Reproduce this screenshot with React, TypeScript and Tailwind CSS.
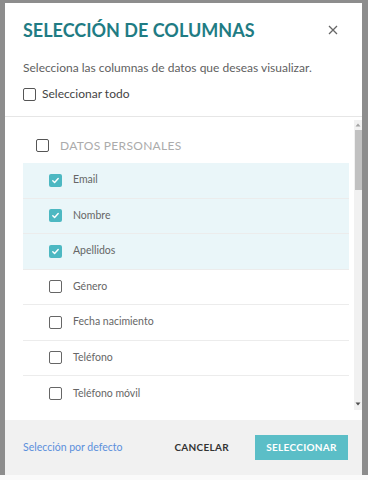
import React from "react";

const font = { fontFamily: "Lato, 'Noto Sans', sans-serif" };

function Box({ checked, dark }: { checked?: boolean; dark?: boolean }) {
  if (checked) {
    return (
      <span className="flex h-[13px] w-[13px] shrink-0 items-center justify-center rounded-[2px] bg-[#4db8c2]">
        <svg width="9" height="9" viewBox="0 0 10 10" fill="none">
          <path d="M2 5.2l2 2L8 2.8" stroke="white" strokeWidth="1.6" strokeLinecap="round" strokeLinejoin="round" />
        </svg>
      </span>
    );
  }
  return (
    <span
      className={`block h-[13px] w-[13px] shrink-0 rounded-[2px] border-[1.5px] bg-white ${dark ? "border-[#555]" : "border-[#666]"}`}
    />
  );
}

const rows = [
  { label: "Email", checked: true },
  { label: "Nombre", checked: true },
  { label: "Apellidos", checked: true },
  { label: "Género", checked: false },
  { label: "Fecha nacimiento", checked: false },
  { label: "Teléfono", checked: false },
  { label: "Teléfono móvil", checked: false },
];

export default function App() {
  return (
    <div className="h-[480px] w-[368px] overflow-hidden bg-[#fafafa]" style={font}>
      <div className="flex h-[475px] bg-[#8d8d8d] pl-[5px] pr-[6px] pt-[3px]">
        <div className="flex w-[357px] flex-col bg-white">
          {/* Header */}
          <div className="border-b border-[#e6e6e6] px-[18px] pb-[14px] pt-[15px]">
            <div className="flex items-center justify-between">
              <h1 className="text-[18px] font-bold leading-[24px] text-[#1f7c84]">
                SELECCIÓN DE COLUMNAS
              </h1>
              <svg width="10" height="10" viewBox="0 0 10 10" className="mr-[6px]">
                <path d="M1 1l8 8M9 1l-8 8" stroke="#666" strokeWidth="1.3" />
              </svg>
            </div>
            <p className="mt-[18px] text-[12px] leading-[16px] text-[#5f5f5f]">
              Selecciona las columnas de datos que deseas visualizar.
            </p>
            <label className="mt-[10px] flex items-center gap-[6px] text-[12px] leading-[16px] text-[#444]">
              <Box dark />
              <span>Seleccionar todo</span>
            </label>
          </div>

          {/* List */}
          <div className="flex h-[303px]">
            <div className="flex-1 pl-[18px] pr-[5px] pt-[11px]">
              <div className="flex h-[35px] items-center gap-[11px] pl-[13px]">
                <Box dark />
                <span className="text-[12px] tracking-[0.3px] text-[#ababab]">DATOS PERSONALES</span>
              </div>
              {rows.map((r, i) => (
                <div
                  key={r.label}
                  className={`flex h-[35.5px] items-center gap-[11px] pl-[26px] ${
                    r.checked ? "bg-[#eaf6f9]" : "bg-white"
                  } ${i < rows.length - 1 ? "border-b border-[#ececec]" : ""}`}
                >
                  <Box checked={r.checked} />
                  <span className="text-[10.5px] text-[#666]">{r.label}</span>
                </div>
              ))}
            </div>
            <div className="mt-[3px] mb-[10px] flex w-[8px] flex-col items-center bg-[#f1f1f1]">
              <svg width="6" height="4" viewBox="0 0 6 4" className="mt-[3px]">
                <path d="M3 0.5L5.5 3.5H0.5z" fill="#a3a3a3" />
              </svg>
              <div className="mt-[3px] h-[60px] w-[7px] bg-[#c1c1c1]" />
              <div className="flex-1" />
              <svg width="6" height="4" viewBox="0 0 6 4" className="mb-[4px]">
                <path d="M3 3.5L5.5 0.5H0.5z" fill="#505050" />
              </svg>
            </div>
          </div>

          {/* Footer */}
          <div className="flex h-[55px] items-center bg-[#f1f1f1] pl-[18px] pr-[14px]">
            <span className="text-[10.5px] text-[#5b8fdc]">Selección por defecto</span>
            <span className="ml-auto text-[10px] font-bold tracking-[0.3px] text-[#333]">CANCELAR</span>
            <button className="ml-[26px] flex h-[25px] w-[93px] items-center justify-center bg-[#5bbec7] text-[10px] font-bold tracking-[0.3px] text-white">
              SELECCIONAR
            </button>
          </div>
        </div>
      </div>
    </div>
  );
}
